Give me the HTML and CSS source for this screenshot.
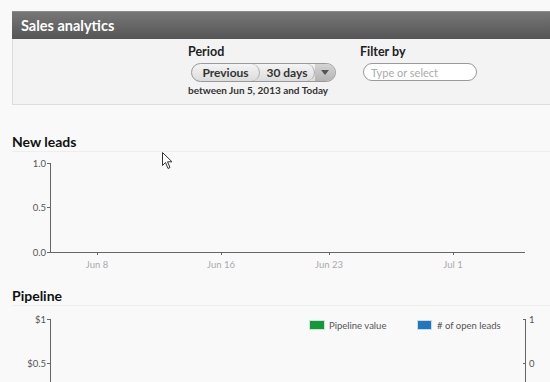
FILE: index.html
```html
<!DOCTYPE html>
<html>
<head>
    <title>Sales analytics</title>
    <link rel="stylesheet" href="styles.css">
</head>
<body>
    <div class="page">
        <div class="panel">
            <div class="panel-header">Sales analytics</div>
            <div class="panel-body">
                <div class="field period">
                    <label>Period</label>
                    <div class="segmented">
                        <span class="seg seg-prev">Previous</span>
                        <span class="seg seg-range">30 days</span>
                        <span class="seg seg-arrow"><span class="caret"></span></span>
                    </div>
                    <div class="hint">between Jun 5, 2013 and Today</div>
                </div>
                <div class="field filter">
                    <label>Filter by</label>
                    <input type="text" class="filter-input" placeholder="Type or select">
                </div>
            </div>
        </div>

        <div class="section">
            <h2>New leads</h2>
            <svg class="chart" width="550" height="125">
                <g class="axis">
                    <line x1="50.5" y1="11" x2="50.5" y2="100.5"></line>
                    <line x1="47" y1="11.5" x2="50" y2="11.5"></line>
                    <line x1="47" y1="55.5" x2="50" y2="55.5"></line>
                    <line x1="47" y1="100.5" x2="525" y2="100.5"></line>
                    <line x1="97.5" y1="100" x2="97.5" y2="103"></line>
                    <line x1="221.5" y1="100" x2="221.5" y2="103"></line>
                    <line x1="329.5" y1="100" x2="329.5" y2="103"></line>
                    <line x1="453.5" y1="100" x2="453.5" y2="103"></line>
                </g>
                <g class="ylabels">
                    <text x="46" y="14.5">1.0</text>
                    <text x="46" y="59">0.5</text>
                    <text x="46" y="103.5">0.0</text>
                </g>
                <g class="xlabels">
                    <text x="97" y="115.5">Jun 8</text>
                    <text x="221" y="115.5">Jun 16</text>
                    <text x="329" y="115.5">Jun 23</text>
                    <text x="453" y="115.5">Jul 1</text>
                </g>
            </svg>
        </div>

        <div class="section">
            <h2>Pipeline</h2>
            <svg class="chart" width="550" height="80">
                <g class="axis">
                    <line x1="50.5" y1="13" x2="50.5" y2="80"></line>
                    <line x1="47" y1="13.5" x2="50" y2="13.5"></line>
                    <line x1="47" y1="57.5" x2="50" y2="57.5"></line>
                    <line x1="525.5" y1="13" x2="525.5" y2="80"></line>
                    <line x1="523" y1="13.5" x2="525" y2="13.5"></line>
                    <line x1="523" y1="57.5" x2="525" y2="57.5"></line>
                </g>
                <g class="ylabels">
                    <text x="46" y="17">$1</text>
                    <text x="46" y="61">$0.5</text>
                </g>
                <g class="ylabels-right">
                    <text x="529" y="17">1</text>
                    <text x="529" y="61">0</text>
                </g>
                <g class="legend">
                    <rect class="swatch-green" x="309.5" y="14.5" width="15" height="9"></rect>
                    <text x="329" y="23">Pipeline value</text>
                    <rect class="swatch-blue" x="417.5" y="14.5" width="14" height="9"></rect>
                    <text x="437" y="23"># of open leads</text>
                </g>
            </svg>
        </div>
    </div>

    <!-- mouse pointer captured in the screenshot -->
    <svg class="cursor" width="12" height="18" viewBox="0 0 12 18">
        <path d="M0.5 0.5 L0.5 13.5 L3.5 10.5 L6 16.5 L8 15.5 L5.5 9.8 L10 9.8 Z" fill="#fff" stroke="#333" stroke-width="1"></path>
    </svg>
</body>
</html>
```

FILE: styles.css
```css
body {
    margin: 0;
    background: #f9f9f9;
    font-family: Lato, "Noto Sans", sans-serif;
    color: #222;
    overflow: hidden;
}
.page {
    padding-top: 11px;
    position: relative;
}
.panel {
    margin-left: 12px;
    margin-right: -20px;
}
.panel-header {
    height: 27px;
    line-height: 27px;
    padding-left: 9px;
    border-top: 1px solid #8a8a8a;
    background: linear-gradient(#777, #555);
    color: #fff;
    font-size: 14.5px;
    font-weight: bold;
}
.panel-body {
    display: flex;
    gap: 25px;
    height: 65px;
    padding-left: 175px;
    background: #f3f3f3;
    border-left: 1px solid #ddd;
    border-bottom: 1px solid #ddd;
}
.field label {
    display: block;
    margin-top: 5px;
    font-size: 12.5px;
    font-weight: bold;
    color: #222;
}
.filter label {
    margin-left: -1px;
}
.segmented {
    display: flex;
    margin-top: 4px;
    margin-left: 3px;
    height: 17px;
    border: 1px solid #999;
    border-radius: 10px;
    background: linear-gradient(#f4f4f4, #dcdcdc);
    width: 143px;
    font-size: 12px;
    font-weight: bold;
    color: #333;
}
.seg {
    line-height: 17px;
    text-align: center;
}
.seg-prev {
    width: 67px;
    border-right: 1px solid #aaa;
    border-radius: 0 9px 9px 0;
}
.seg-range {
    width: 54px;
    border-right: 1px solid #aaa;
    border-radius: 0 9px 9px 0;
}
.seg-arrow {
    flex: 1;
    display: flex;
    align-items: center;
    justify-content: center;
    background: linear-gradient(#d4d4d4, #b4b4b4);
    border-radius: 0 9px 9px 0;
}
.caret {
    width: 0;
    height: 0;
    border-left: 4px solid transparent;
    border-right: 4px solid transparent;
    border-top: 5px solid #555;
}
.hint {
    margin-top: 2px;
    font-size: 10px;
    font-weight: bold;
    color: #333;
}
.filter-input {
    margin-top: 4px;
    margin-left: 2px;
    width: 114px;
    height: 18px;
    box-sizing: border-box;
    border: 1px solid #999;
    border-radius: 10px;
    background: #fff;
    padding: 0 7px;
    font-family: Lato, sans-serif;
    font-size: 11px;
}
.filter-input::placeholder {
    color: #aaa;
}
.section h2 {
    margin: 0;
    margin-left: 12px;
    padding-top: 28px;
    height: 18px;
    line-height: 18px;
    font-size: 14px;
    font-weight: bold;
    color: #111;
    border-bottom: 1px solid #eee;
}
.section + .section h2 {
    padding-top: 10px;
}
.chart {
    display: block;
    font-family: Lato, sans-serif;
}
.axis line {
    stroke: #666;
    stroke-width: 1;
}
.ylabels text {
    text-anchor: end;
    font-size: 9.5px;
    fill: #555;
}
.ylabels-right text {
    font-size: 9.5px;
    fill: #555;
}
.xlabels text {
    text-anchor: middle;
    font-size: 9.5px;
    fill: #aaa;
}
.legend text {
    font-size: 9.5px;
    fill: #555;
}
.swatch-green {
    fill: #13983b;
    stroke: #cde6d2;
}
.swatch-blue {
    fill: #2276bf;
    stroke: #c9dced;
}
.cursor {
    position: absolute;
    left: 162px;
    top: 152px;
}
```
